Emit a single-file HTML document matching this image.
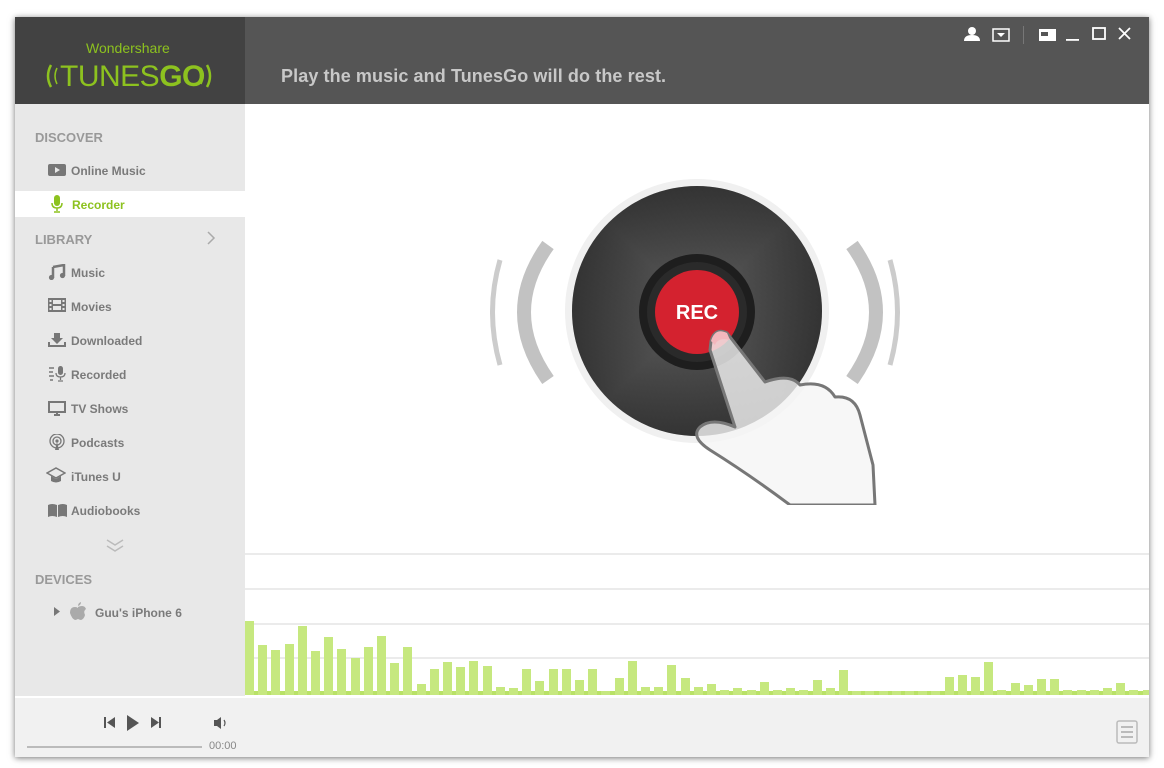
<!DOCTYPE html>
<html><head><meta charset="utf-8"><style>
*{margin:0;padding:0;box-sizing:border-box}
body{width:1164px;height:768px;background:#fff;position:relative;overflow:hidden;font-family:"Liberation Sans",sans-serif}
.a{position:absolute}
.win{left:15px;top:17px;width:1134px;height:740px;box-shadow:0 1px 6px rgba(0,0,0,.55);background:#fff}
.hdrL{left:15px;top:17px;width:230px;height:87px;background:#424242}
.hdrR{left:245px;top:17px;width:904px;height:87px;background:#555}
.side{left:15px;top:104px;width:230px;height:592px;background:#e8e8e8}
.sec{left:35px;font-size:13px;font-weight:bold;color:#999}
.it{left:71px;font-size:12px;font-weight:bold;color:#7a7a7a}
.ic{left:48px}
.bar{position:absolute;width:9px;background:#c6e87f}
.grid{left:245px;width:904px;height:2px;background:#ebebeb}
</style></head><body>
<div class="a win"></div>
<div class="a hdrL"></div>
<div class="a hdrR"></div>
<div class="a" style="left:86px;top:40px;font-size:14px;color:#8dc21f">Wondershare</div>
<svg class="a" style="left:46px;top:62px" width="14" height="28"><path d="M5 3Q-1 14 5 25" stroke="#8dc21f" stroke-width="2.5" fill="none"/><path d="M11 6Q7 14 11 22" stroke="#8dc21f" stroke-width="1.5" fill="none"/></svg>
<svg class="a" style="left:198px;top:62px" width="14" height="28"><path d="M9 3Q15 14 9 25" stroke="#8dc21f" stroke-width="2.5" fill="none"/><path d="M3 6Q7 14 3 22" stroke="#8dc21f" stroke-width="1.5" fill="none"/></svg>
<div class="a" style="left:60px;top:57px;font-size:30px;color:#8dc21f;letter-spacing:-0.5px;line-height:40px;white-space:nowrap"><span style="font-weight:100">TUNES</span><b>GO</b></div>
<div class="a" style="left:281px;top:66px;font-size:18px;font-weight:bold;color:#c8c8c8;letter-spacing:0.1px;white-space:nowrap">Play the music and TunesGo will do the rest.</div>
<!-- top icons -->
<svg class="a" style="left:960px;top:24px" width="180" height="22">
<circle cx="12" cy="7" r="4" fill="#fff"/><path d="M4 17 Q4 11 12 11 Q20 11 20 17Z" fill="#fff"/>
<rect x="33" y="5" width="16" height="12" fill="none" stroke="#fff" stroke-width="1.5"/><path d="M37 9h8l-4 4z" fill="#fff"/>
<rect x="63" y="2" width="1" height="18" fill="#777"/>
<rect x="79" y="5" width="17" height="12" fill="#fff"/><rect x="81" y="8" width="7" height="4" fill="#555"/>
<rect x="106" y="15" width="13" height="1.8" fill="#fff"/>
<rect x="133" y="4" width="12" height="11" fill="none" stroke="#fff" stroke-width="1.8"/>
<path d="M159 4l11 11M170 4l-11 11" stroke="#fff" stroke-width="1.8"/>
</svg>
<div class="a side"></div>
<div class="a sec" style="top:130px">DISCOVER</div>
<svg class="a ic" style="top:164px" width="18" height="12"><rect width="18" height="12" rx="2" fill="#777"/><path d="M7 3l5 3-5 3z" fill="#e8e8e8"/></svg>
<div class="a it" style="top:164px">Online Music</div>
<div class="a" style="left:15px;top:191px;width:230px;height:26px;background:#fff"></div>
<svg class="a" style="left:50px;top:195px" width="14" height="18"><rect x="4" y="0" width="6" height="11" rx="3" fill="#8dc21f"/><path d="M2 8q0 5 5 5t5-5M7 13v3M4 17h6" stroke="#8dc21f" stroke-width="1.5" fill="none"/></svg>
<div class="a it" style="top:198px;left:72px;color:#8dc21f">Recorder</div>
<div class="a sec" style="top:232px">LIBRARY</div>
<svg class="a" style="left:206px;top:231px" width="10" height="14"><path d="M2 1l6 6-6 6" stroke="#aaa" stroke-width="1.5" fill="none"/></svg>
<svg class="a ic" style="top:264px" width="18" height="16"><path d="M5 3l11-2v11M5 3v11" stroke="#777" stroke-width="2.5" fill="none"/><circle cx="3.5" cy="13.5" r="2.6" fill="#777"/><circle cx="14.5" cy="11.5" r="2.6" fill="#777"/></svg>
<div class="a it" style="top:266px">Music</div>
<svg class="a ic" style="top:298px" width="18" height="14"><rect width="18" height="14" fill="#777"/><rect x="5" y="2" width="8" height="4" fill="#e8e8e8"/><rect x="5" y="8" width="8" height="4" fill="#e8e8e8"/><rect x="1.5" y="2" width="2" height="2" fill="#e8e8e8"/><rect x="1.5" y="6" width="2" height="2" fill="#e8e8e8"/><rect x="1.5" y="10" width="2" height="2" fill="#e8e8e8"/><rect x="14.5" y="2" width="2" height="2" fill="#e8e8e8"/><rect x="14.5" y="6" width="2" height="2" fill="#e8e8e8"/><rect x="14.5" y="10" width="2" height="2" fill="#e8e8e8"/></svg>
<div class="a it" style="top:300px">Movies</div>
<svg class="a ic" style="top:332px" width="18" height="16"><path d="M6 1h6v5h3l-6 6-6-6h3z" fill="#777"/><path d="M1 10v4h16v-4" stroke="#777" stroke-width="2" fill="none"/></svg>
<div class="a it" style="top:334px">Downloaded</div>
<svg class="a ic" style="top:366px" width="18" height="16"><path d="M1 2h5M1 6h4M1 10h5M2 14h3" stroke="#777" stroke-width="1.5"/><rect x="10" y="0" width="5" height="9" rx="2.5" fill="#777"/><path d="M8 7q0 4 4.5 4t4.5-4M12.5 11v3M10 15h5" stroke="#777" stroke-width="1.3" fill="none"/></svg>
<div class="a it" style="top:368px">Recorded</div>
<svg class="a ic" style="top:401px" width="18" height="15"><rect x="1" y="1" width="16" height="10" fill="none" stroke="#777" stroke-width="2"/><path d="M6 14h6M9 11v3" stroke="#777" stroke-width="2"/></svg>
<div class="a it" style="top:402px">TV Shows</div>
<svg class="a ic" style="top:434px" width="18" height="16"><circle cx="9" cy="7" r="7" fill="none" stroke="#777" stroke-width="1.3"/><circle cx="9" cy="7" r="4" fill="none" stroke="#777" stroke-width="1.3"/><circle cx="9" cy="7" r="1.6" fill="#777"/><path d="M7 16l2-8 2 8z" fill="#777"/></svg>
<div class="a it" style="top:436px">Podcasts</div>
<svg class="a" style="left:46px;top:467px" width="20" height="18"><path d="M1 6l9-5 9 5-9 5z" fill="none" stroke="#777" stroke-width="1.5"/><path d="M5 9v5q5 3 10 0V9l-5 3z" fill="#777"/></svg>
<div class="a it" style="top:470px">iTunes U</div>
<svg class="a ic" style="top:503px" width="19" height="14"><path d="M0 2q4-2 9 0v12q-5-2-9 0zM10 2q5-2 9 0v12q-4-2-9 0z" fill="#777"/></svg>
<div class="a it" style="top:504px">Audiobooks</div>
<svg class="a" style="left:106px;top:538px" width="18" height="15"><path d="M1 2l8 5 8-5M1 8l8 5 8-5" stroke="#bbb" stroke-width="1.5" fill="none"/></svg>
<div class="a sec" style="top:572px">DEVICES</div>
<svg class="a" style="left:54px;top:607px" width="6" height="9"><path d="M0 0l6 4.5-6 4.5z" fill="#777"/></svg>
<svg class="a" style="left:69px;top:601px" width="18" height="21"><path d="M12 1q0 3-3 4 0-3 3-4zM9 6q2-1 4-1 3 0 4 3-3 2-1 6-1 4-4 5-1 0-3-1-2 1-3 1-3-1-5-7 0-6 5-6 2 0 3 1z" fill="#aaa"/></svg>
<div class="a it" style="left:95px;top:606px">Guu's iPhone 6</div>

<div class="a grid" style="top:553px"></div>
<div class="a grid" style="top:588px"></div>
<div class="a grid" style="top:623px"></div>
<div class="a grid" style="top:657px"></div>
<div class="a" style="left:245px;top:691px;width:904px;height:4px;background:#b9e266"></div>
<div id="bars"></div>
<script>
var t=[621,645,650,644,626,651,637,649,658,647,636,663,647,684,669,662,667,661,666,687,688,669,681,669,669,680,669,691,678,661,687,687,665,678,687,684,690,688,690,682,690,688,690,680,688,670,691,691,691,691,691,691,691,677,675,677,662,690,683,685,679,679,690,690,690,688,683,690,690];
var h='';for(var i=0;i<t.length;i++){var x=245+Math.round(13.2*i);var w=Math.min(9,1149-x);if(w>0)h+='<div class="bar" style="left:'+x+'px;top:'+t[i]+'px;height:'+(695-t[i])+'px;width:'+w+'px"></div>';}
document.getElementById('bars').innerHTML=h;
</script>

<svg class="a" style="left:490px;top:175px" width="420" height="330">
<defs>
<linearGradient id="sh" x1="0" y1="0" x2="1" y2="1"><stop offset="0" stop-color="#2b2b2b"/><stop offset=".5" stop-color="#5e5e5e"/><stop offset="1" stop-color="#2b2b2b"/></linearGradient>
<linearGradient id="sh2" x1="1" y1="0" x2="0" y2="1"><stop offset="0" stop-color="#000" stop-opacity=".5"/><stop offset=".5" stop-color="#000" stop-opacity="0"/><stop offset="1" stop-color="#000" stop-opacity=".5"/></linearGradient>
</defs>
<path d="M10 85 Q-5 137 10 190" stroke="#ccc" stroke-width="5" fill="none"/>
<path d="M58 70 Q10 137 58 205" stroke="#c2c2c2" stroke-width="14" fill="none"/>
<path d="M362 70 Q410 137 362 205" stroke="#c2c2c2" stroke-width="14" fill="none"/>
<path d="M400 85 Q415 137 400 190" stroke="#ccc" stroke-width="5" fill="none"/>
<circle cx="207" cy="136" r="132" fill="#f0f0f0"/>
<circle cx="207" cy="136" r="125" fill="url(#sh)"/>
<circle cx="207" cy="136" r="125" fill="url(#sh2)"/>
<circle cx="207" cy="137" r="58" fill="#1e1e1e"/>
<circle cx="207" cy="137" r="50" fill="#2a2a2a"/>
<circle cx="207" cy="137" r="42" fill="#d4222f"/>
<text x="207" y="144" font-size="20" font-weight="bold" fill="#fff" text-anchor="middle" font-family="Liberation Sans,sans-serif">REC</text>
<path d="M221 166 Q225 152 237 158 L275 207 Q300 198 310 210 Q335 205 345 222 Q365 220 370 240 L383 290 L385 330 L300 330 Q260 300 220 275 Q200 262 210 252 Q222 242 245 252 L220 175 Z" fill="rgba(245,245,245,.8)" stroke="#777" stroke-width="3" stroke-linejoin="round"/>
<path d="M221 166 Q225 152 237 158 L240 165 Q228 162 225 170Z" fill="#f3b7bd"/>
</svg>

<div class="a" style="left:15px;top:698px;width:1134px;height:59px;background:#f1f1f1"></div>
<svg class="a" style="left:100px;top:712px" width="140" height="22">
<rect x="4" y="5" width="2" height="11" fill="#555"/><path d="M15 5v11l-8-5.5z" fill="#555"/>
<path d="M27 3v16l12-8z" fill="#555"/>
<path d="M51 5v11l8-5.5z" fill="#555"/><rect x="59" y="5" width="2" height="11" fill="#555"/>
<path d="M114 8h3l4-3v12l-4-3h-3z" fill="#555"/><path d="M124 8q2 3 0 6" stroke="#555" stroke-width="1.2" fill="none"/>
</svg>
<div class="a" style="left:27px;top:746px;width:175px;height:2px;background:#bbb"></div>
<div class="a" style="left:209px;top:740px;font-size:11px;color:#888">00:00</div>
<svg class="a" style="left:1116px;top:720px" width="22" height="24"><rect x="1" y="1" width="20" height="22" rx="2" fill="none" stroke="#bbb" stroke-width="1.5"/><path d="M5 7h12M5 12h12M5 17h12" stroke="#bbb" stroke-width="2"/></svg>
</body></html>
